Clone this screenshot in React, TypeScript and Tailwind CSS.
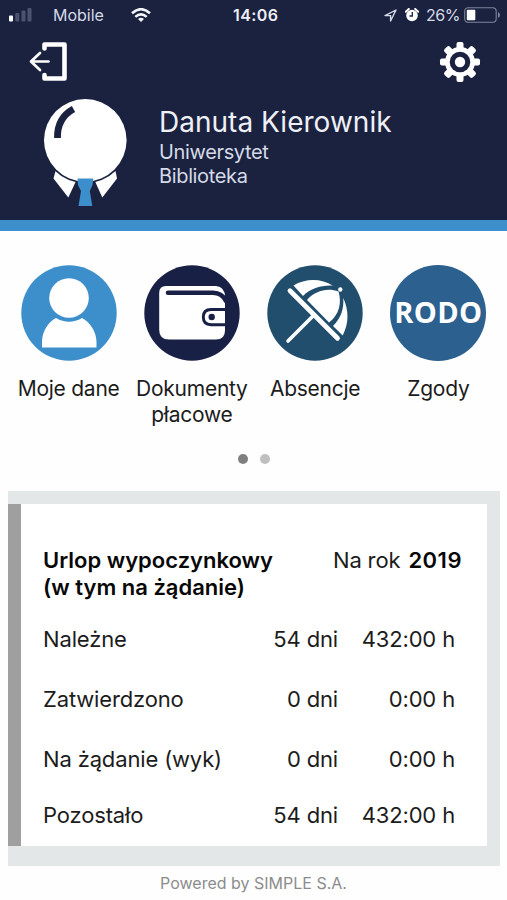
import React from 'react';

interface Tile {
  label: string;
  icon: React.ReactNode;
}

interface LeaveRow {
  name: string;
  days: string;
  hours: string;
  height: string;
}

const PersonIcon = () => (
  <svg className="w-24 h-24" viewBox="0 0 96 96">
    <circle cx="48" cy="48" r="47.7" fill="#3d8fcc" />
    <circle cx="48" cy="33" r="19.8" fill="#fff" />
    <path d="M35 53Q48 60.500 61 53C69 57 75.500 67 75.500 77V82.500H21V77C21 67 27 57 35 53Z" fill="#fff" />
  </svg>
);

const WalletIcon = () => (
  <svg className="w-24 h-24" viewBox="0 0 96 96">
    <circle cx="48" cy="48" r="47.7" fill="#182145" />
    <path d="M22 21H72Q81 22 81 32V65.500Q81 74.500 72 74.500H25Q15.200 74.500 15.200 65V28Q15.200 21 22 21Z" fill="#fff" />
    <path d="M24 27.800H69Q78 28 82 36" fill="none" stroke="#182145" strokeWidth="4.600" strokeLinecap="round" />
    <path d="M81 44.500H67Q59.300 44.500 59.300 52T67 59.700H81" fill="#fff" stroke="#182145" strokeWidth="2.900" />
    <circle cx="67.700" cy="52" r="3.200" fill="#182145" />
  </svg>
);

const UmbrellaIcon = () => (
  <svg className="w-24 h-24" viewBox="0 0 96 96">
    <circle cx="48" cy="48" r="47.7" fill="#224e6d" />
    {/* Canopy panels */}
    <path d="M26.500 20.500C38 13.500 54 13 66 20.700C54 20 43 24 36 31Z" fill="#fff" />
    <path d="M40 35C48 26 60 22.500 71.500 26.500C75 38 72 50 62 57.500Z" fill="#fff" />
    <path d="M76.300 33C82 46 82 58 75.700 70.500L66 61C74 53 77 44 76.300 33Z" fill="#fff" />
    <circle cx="73.300" cy="24.500" r="2.200" fill="#fff" />
    {/* Rim and pole */}
    <path d="M23 25.700L70.500 73.200" stroke="#fff" strokeWidth="4.800" strokeLinecap="round" />
    <path d="M46 51L21 76" stroke="#fff" strokeWidth="3.600" strokeLinecap="round" />
  </svg>
);

const RodoIcon = () => (
  <div className="w-24 h-24 pb-1 rounded-full bg-[#2b608f] flex items-center justify-center text-white font-['Open_Sans',sans-serif] font-bold text-[29px] leading-none tracking-[0.4px]">
    RODO
  </div>
);

const Avatar = () => (
  <svg className="w-[90px] h-[116px]" viewBox="40 94 90 116">
    <path d="M55.500 171L77 179L68.300 197.500L53.500 178.500Z" fill="#fff" />
    <path d="M115.500 171L94 179L102.300 197.500L117 178.500Z" fill="#fff" />
    <circle cx="85.300" cy="140.300" r="43" fill="#1b2240" />
    <circle cx="85.300" cy="140.300" r="41.300" fill="#fff" />
    <path d="M77.500 178.500H93.300L92.500 185L89.800 191L92.300 206H78.500L81 191L78 185Z" fill="#3d8fcc" />
    <path d="M73.500 109Q57 118 57.500 138" fill="none" stroke="#1b2240" strokeWidth="6.800" />
  </svg>
);

const LogoutIcon = () => (
  <svg className="w-10 h-10" viewBox="28 41 40 40" fill="none" stroke="#fff">
    <path d="M44.500 48.500V44.500H64.500V78.500H44.500V75" strokeWidth="4.600" strokeLinecap="round" strokeLinejoin="round" />
    <path d="M48.500 61.500H31M40 53L31 61.500L40 70" strokeWidth="2.700" strokeLinecap="round" strokeLinejoin="round" />
  </svg>
);

const GearIcon = () => (
  <svg className="w-[42px] h-[42px]" viewBox="-21 -21 42 42">
    <g fill="#fff">
      <rect x="-3.500" y="-20" width="7" height="40" rx="2" />
      <rect x="-20" y="-3.500" width="40" height="7" rx="2" />
      <rect x="-3.700" y="-20" width="7.400" height="40" rx="2" transform="rotate(45)" />
      <rect x="-3.700" y="-20" width="7.400" height="40" rx="2" transform="rotate(-45)" />
      <circle r="15" />
    </g>
    <circle r="10.300" fill="#1b2240" />
    <circle r="5.200" fill="#fff" />
  </svg>
);

const StatusBar = () => (
  <div className="h-[30px] flex items-center pl-[9px] pr-[6px] text-[#d5dae6] text-[16px] leading-[30px]">
    <svg className="w-[23px] h-[14px]" viewBox="0 0 23 14">
      <rect x="0" y="7.500" width="4" height="6" rx="1" fill="#fff" />
      <rect x="6.300" y="5" width="4" height="8.500" rx="1" fill="#4b5370" />
      <rect x="12.500" y="2.500" width="4" height="11" rx="1" fill="#4b5370" />
      <rect x="18.500" y="0" width="4" height="13.500" rx="1" fill="#4b5370" />
    </svg>
    <span className="ml-[21px] w-[51px] whitespace-nowrap">Mobile</span>
    <svg className="ml-[27px] w-[20px] h-[15px]" viewBox="0 0 20 15" fill="none" stroke="#f2f4f8" strokeWidth="2.600">
      <path d="M1 5.200Q10 -2.800 19 5.200M4.300 8.900Q10 3.800 15.700 8.900" />
      <path d="M10 14L7 11Q10 8.500 13 11Z" fill="#f2f4f8" stroke="none" />
    </svg>
    <span className="ml-[82px] w-[46px] whitespace-nowrap font-semibold text-[#eef0f6] tracking-[0.4px]">14:06</span>
    <svg className="ml-[105px] w-[13px] h-[13px]" viewBox="0 0 13 13" fill="none" stroke="#d5dae6" strokeWidth="1.400" strokeLinejoin="round">
      <path d="M1 6.600L12 1L6.600 12V6.600Z" />
    </svg>
    <svg className="ml-[8px] w-[14px] h-[14px]" viewBox="0 0 14 14">
      <circle cx="7" cy="7.500" r="5.800" fill="#fff" />
      <path d="M.8 3.800L3.800 1M13.200 3.800L10.200 1" stroke="#fff" strokeWidth="2" strokeLinecap="round" />
      <path d="M7.300 4V8H4.500" fill="none" stroke="#1b2240" strokeWidth="1.300" />
    </svg>
    <span className="ml-[7px] w-[35px] whitespace-nowrap tracking-[-0.5px]">26%</span>
    <svg className="ml-[3px] w-[37px] h-[16px]" viewBox="0 0 37 16">
      <rect x=".7" y=".7" width="31.500" height="14.600" rx="3.500" fill="none" stroke="#7d849c" strokeWidth="1.100" />
      <rect x="2.800" y="2.800" width="8.500" height="10.400" rx="1" fill="#fff" />
      <path d="M34 5V11Q36 10 36 8T34 5Z" fill="#7d849c" />
    </svg>
  </div>
);

const tiles: Tile[] = [
  { label: 'Moje dane', icon: <PersonIcon /> },
  { label: 'Dokumenty płacowe', icon: <WalletIcon /> },
  { label: 'Absencje', icon: <UmbrellaIcon /> },
  { label: 'Zgody', icon: <RodoIcon /> },
];

const rows: LeaveRow[] = [
  { name: 'Należne', days: '54 dni', hours: '432:00 h', height: 'h-[60px]' },
  { name: 'Zatwierdzono', days: '0 dni', hours: '0:00 h', height: 'h-[60px]' },
  { name: 'Na żądanie (wyk)', days: '0 dni', hours: '0:00 h', height: 'h-[56px]' },
  { name: 'Pozostało', days: '54 dni', hours: '432:00 h', height: 'h-[52px]' },
];

const App: React.FC = () => {
  return (
    <div className="w-[507px] h-[900px] overflow-hidden bg-[#fefefe] text-[#1c1c1c] font-['Inter',sans-serif]">
      <header className="h-[231px] bg-[#1b2240] border-b-[11px] border-[#3d8fcc]">
        <StatusBar />
        <div className="h-[64px] flex justify-between pl-[28px] pr-[26px] pt-[11px]">
          <LogoutIcon />
          <GearIcon />
        </div>
        <div className="flex pl-[40px]">
          <Avatar />
          <div className="ml-[29px] pt-[11px] text-[#d5dae6] text-[20px] leading-[24px] tracking-[-0.35px] whitespace-nowrap">
            <div className="text-[28px] leading-[35px] tracking-[0.02px] text-[#eef0f6]">Danuta Kierownik</div>
            <div>Uniwersytet</div>
            <div>Biblioteka</div>
          </div>
        </div>
      </header>

      <nav className="grid grid-cols-4 pl-[7px] pr-[7px] pt-[34px] h-[223px]">
        {tiles.map((tile) => (
          <div key={tile.label} className="flex flex-col items-center">
            {tile.icon}
            <span className="mt-[15px] text-[21px] leading-[26px] tracking-[-0.25px] text-center">{tile.label}</span>
          </div>
        ))}
      </nav>

      {/* Pager */}
      <div className="h-[37px] flex justify-center gap-[12px]">
        <span className="w-[10px] h-[10px] rounded-full bg-[#7f7f7f]"></span>
        <span className="w-[10px] h-[10px] rounded-full bg-[#bfbfbf]"></span>
      </div>

      {/* Leave summary */}
      <section className="ml-[8px] mr-[7px] h-[375px] bg-[#e4e7e8] pt-[13px] pr-[13px]">
        <div className="h-[342px] bg-white border-l-[13px] border-[#9f9f9f] pl-[22px] pt-[43px] text-[22px] tracking-[-0.15px]">
          <div className="flex justify-between pr-[25px] leading-[27px] h-[62px]">
            <h2 className="font-semibold text-[#080808] tracking-normal whitespace-nowrap">
              Urlop wypoczynkowy<br />(w tym na żądanie)
            </h2>
            <div className="whitespace-nowrap">
              Na rok <span className="font-semibold text-[#080808] ml-[2px] tracking-[0.5px]">2019</span>
            </div>
          </div>
          {rows.map((row) => (
            <div key={row.name} className={`flex pr-[32px] leading-[60px] whitespace-nowrap ${row.height}`}>
              <span className="flex-1">{row.name}</span>
              <span>{row.days}</span>
              <span className="w-[117px] text-right">{row.hours}</span>
            </div>
          ))}
        </div>
      </section>

      <footer className="pt-[4px] text-center text-[16px] leading-[26px] text-[#8c8c8c]">Powered by SIMPLE S.A.</footer>
    </div>
  );
};

export default App;
